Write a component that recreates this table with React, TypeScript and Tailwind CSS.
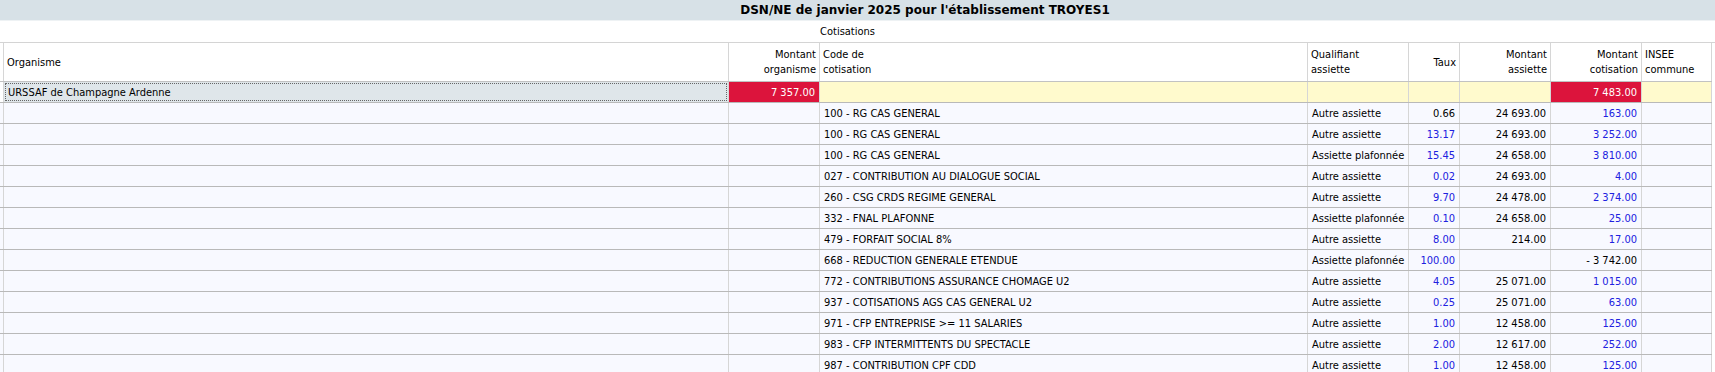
import React from 'react';

type Row = {
  code: string;
  qualifiant: string;
  taux: string;
  tauxBlue: boolean;
  assiette: string;
  cotisation: string;
  cotisationBlue: boolean;
};

const rows: Row[] = [
  { code: '100 - RG CAS GENERAL', qualifiant: 'Autre assiette', taux: '0.66', tauxBlue: false, assiette: '24 693.00', cotisation: '163.00', cotisationBlue: true },
  { code: '100 - RG CAS GENERAL', qualifiant: 'Autre assiette', taux: '13.17', tauxBlue: true, assiette: '24 693.00', cotisation: '3 252.00', cotisationBlue: true },
  { code: '100 - RG CAS GENERAL', qualifiant: 'Assiette plafonnée', taux: '15.45', tauxBlue: true, assiette: '24 658.00', cotisation: '3 810.00', cotisationBlue: true },
  { code: '027 - CONTRIBUTION AU DIALOGUE SOCIAL', qualifiant: 'Autre assiette', taux: '0.02', tauxBlue: true, assiette: '24 693.00', cotisation: '4.00', cotisationBlue: true },
  { code: '260 - CSG CRDS REGIME GENERAL', qualifiant: 'Autre assiette', taux: '9.70', tauxBlue: true, assiette: '24 478.00', cotisation: '2 374.00', cotisationBlue: true },
  { code: '332 - FNAL PLAFONNE', qualifiant: 'Assiette plafonnée', taux: '0.10', tauxBlue: true, assiette: '24 658.00', cotisation: '25.00', cotisationBlue: true },
  { code: '479 - FORFAIT SOCIAL 8%', qualifiant: 'Autre assiette', taux: '8.00', tauxBlue: true, assiette: '214.00', cotisation: '17.00', cotisationBlue: true },
  { code: '668 - REDUCTION GENERALE ETENDUE', qualifiant: 'Assiette plafonnée', taux: '100.00', tauxBlue: true, assiette: '', cotisation: '- 3 742.00', cotisationBlue: false },
  { code: '772 - CONTRIBUTIONS ASSURANCE CHOMAGE U2', qualifiant: 'Autre assiette', taux: '4.05', tauxBlue: true, assiette: '25 071.00', cotisation: '1 015.00', cotisationBlue: true },
  { code: '937 - COTISATIONS AGS CAS GENERAL U2', qualifiant: 'Autre assiette', taux: '0.25', tauxBlue: true, assiette: '25 071.00', cotisation: '63.00', cotisationBlue: true },
  { code: '971 - CFP ENTREPRISE >= 11 SALARIES', qualifiant: 'Autre assiette', taux: '1.00', tauxBlue: true, assiette: '12 458.00', cotisation: '125.00', cotisationBlue: true },
  { code: '983 - CFP INTERMITTENTS DU SPECTACLE', qualifiant: 'Autre assiette', taux: '2.00', tauxBlue: true, assiette: '12 617.00', cotisation: '252.00', cotisationBlue: true },
  { code: '987 - CONTRIBUTION CPF CDD', qualifiant: 'Autre assiette', taux: '1.00', tauxBlue: true, assiette: '12 458.00', cotisation: '125.00', cotisationBlue: true },
];

// column widths include the 1px left border of each cell
const grid = 'grid grid-cols-[3px_725px_91px_488px_101px_51px_91px_91px_71px] w-[1712px]';
const cell = 'border-l border-[#d6d6d6] flex items-center min-w-0 whitespace-nowrap overflow-hidden';
const left = `${cell} pl-[4px]`;
const right = `${cell} justify-end pr-[4px]`;

const App = () => {
  return (
    <div className="w-full h-[372px] overflow-hidden bg-white text-[11px] leading-[15px] text-black font-['DejaVu_Sans_Condensed','DejaVu_Sans',sans-serif] font-stretch-condensed">
      {/* title */}
      <div className="w-[1850px] h-[21px] bg-[#d7e1e7] border-b border-[#eef2f4] flex items-center justify-center font-bold text-[12px] font-['DejaVu_Sans',sans-serif] font-stretch-normal">
        DSN/NE de janvier 2025 pour l'établissement TROYES1
      </div>

      <div className="h-[22px] border-b border-[#d4d4d4] flex items-center">
        <div className="w-[1695px] text-center">Cotisations</div>
      </div>

      {/* header */}
      <div className={`${grid} h-[39px] border-b border-[#c2c2c2] bg-white`}>
        <div />
        <div className={`${cell} pl-[3px]`}>Organisme</div>
        <div className={`${cell} justify-end text-right pr-[3px]`}>
          Montant
          <br />
          organisme
        </div>
        <div className={`${cell} pl-[3px]`}>
          Code de
          <br />
          cotisation
        </div>
        <div className={`${cell} pl-[3px]`}>
          Qualifiant
          <br />
          assiette
        </div>
        <div className={`${cell} justify-end pr-[3px]`}>Taux</div>
        <div className={`${cell} justify-end text-right pr-[3px]`}>
          Montant
          <br />
          assiette
        </div>
        <div className={`${cell} justify-end text-right pr-[3px]`}>
          Montant
          <br />
          cotisation
        </div>
        <div className={`${cell} pl-[3px] border-r`}>
          INSEE
          <br />
          commune
        </div>
      </div>

      {/* organisme total row */}
      <div className={`${grid} h-[21px] border-b border-[#b9b9b9] bg-[#fffacd]`}>
        <div className="bg-white" />
        <div className="border-l border-[#d6d6d6] bg-[#dfe6ea] p-[1px]">
          <div className="h-full border border-dotted border-[#666] flex items-center pl-[2px]">
            URSSAF de Champagne Ardenne
          </div>
        </div>
        <div className={`${right} bg-[#dc143c] text-white`}>7 357.00</div>
        <div className={left} />
        <div className={left} />
        <div className={right} />
        <div className={right} />
        <div className={`${right} bg-[#dc143c] text-white`}>7 483.00</div>
        <div className={`${left} border-r`} />
      </div>

      {rows.map((r, i) => (
        <div key={i} className={`${grid} h-[21px] border-b border-[#b9b9b9] bg-[#f8f9ff]`}>
          <div />
          <div className={left} />
          <div className={right} />
          <div className={left}>{r.code}</div>
          <div className={left}>{r.qualifiant}</div>
          <div className={`${right} ${r.tauxBlue ? 'text-[#2020e0]' : ''}`}>{r.taux}</div>
          <div className={right}>{r.assiette}</div>
          <div className={`${right} ${r.cotisationBlue ? 'text-[#2020e0]' : ''}`}>{r.cotisation}</div>
          <div className={`${left} border-r`} />
        </div>
      ))}
    </div>
  );
};

export default App;
